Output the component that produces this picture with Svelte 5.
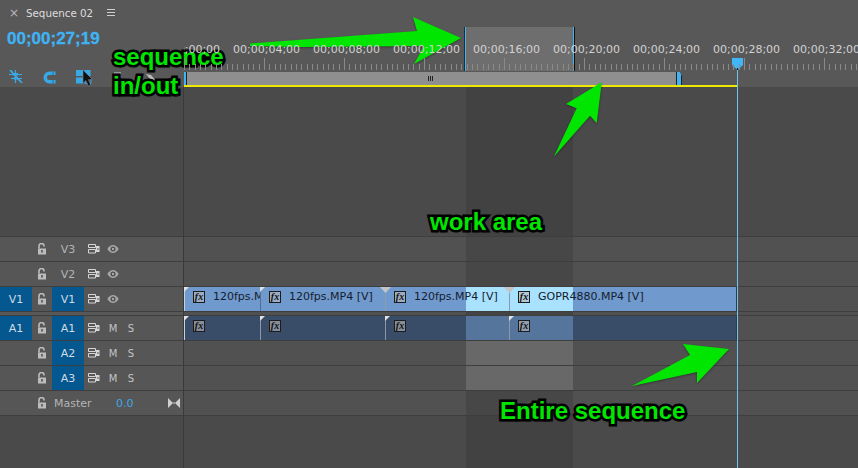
<script>
  const labels = ['00', '04', '08', '12', '16', '20', '24', '28', '32'];
  const ticks = Array.from({ length: 128 }, (_, i) => ({ x: Math.round((i * 16) / 3), major: i % 15 === 0 }));
  const tracks = [
    { name: 'V3', kind: 'v', row: 'plain-dark' },
    { name: 'V2', kind: 'v', row: 'plain-dark' },
    { name: 'V1', kind: 'v', src: 'V1', on: true, row: 'vclip', gapAfter: true },
    { name: 'A1', kind: 'a', src: 'A1', on: true, row: 'aclip' },
    { name: 'A2', kind: 'a', on: true, row: 'plain-light' },
    { name: 'A3', kind: 'a', on: true, row: 'plain-light' }
  ];
  const clips = [
    { w: 76, text: '120fps.MP4 [V]' },
    { w: 125, text: '120fps.MP4 [V]' },
    { w: 124, text: '120fps.MP4 [V]', wide: true },
    { w: 227, text: 'GOPR4880.MP4 [V]', wide: true }
  ];
</script>

{#snippet lock()}
  <svg class="ico" viewBox="0 0 10 12" width="10" height="12">
    <path d="M2 5.500V3a2.500 2.500 0 0 1 5 0v.6" fill="none" stroke="#bcbcbc" stroke-width="1.600" />
    <path d="M1 5.500h8V11.500H1z" fill="#bcbcbc" />
    <rect x="4.200" y="7" width="1.600" height="2.600" fill="#555" />
  </svg>
{/snippet}

{#snippet trackIcon()}
  <svg class="slot" viewBox="0 0 12 10" width="12" height="10">
    <path d="M.5.5h7v3h-7zM.5 5.500h7v3.500h-7z" fill="none" stroke="#d6d6d6" />
    <path d="M8 2h3.500v6H8z" fill="#d6d6d6" />
    <path d="M9 5h2" stroke="#555" />
  </svg>
{/snippet}

{#snippet eye()}
  <svg class="slot" viewBox="0 0 12 10" width="12" height="10">
    <path d="M.3 5C2 2.200 4 1 6 1s4 1.200 5.700 4C10 7.800 8 9 6 9S2 7.800.3 5z" fill="#a8a8a8" />
    <circle cx="6" cy="5" r="2.500" fill="#4c4c4c" />
    <circle cx="6" cy="5" r="1.200" fill="#a8a8a8" />
  </svg>
{/snippet}

<div class="app">
  <header class="top">
    <div class="panel">
      <div class="tab">
        <span class="close">×</span>
        <span class="title">Sequence 02</span>
        <svg class="burger" viewBox="0 0 8 8" width="8" height="8">
          <path d="M0 .5h8M0 3.500h8M0 6.500h8" stroke="#cfcfcf" />
        </svg>
      </div>
      <div class="timecode">00;00;27;19</div>
      <div class="tools">
        <svg class="tool snap" viewBox="0 0 14 13" width="14" height="13">
          <path d="M0 4.500h13M2 8.500h11M6.500 0v13" stroke="#39a9e6" stroke-width="1.200" />
          <path d="M1 0l12 13" stroke="#39a9e6" stroke-width="1.800" />
          <path d="M4 3h5v2.500H4zM5 7h4v2.500H5z" fill="#39a9e6" />
        </svg>
        <svg class="tool magnet" viewBox="0 0 13 13" width="13" height="13">
          <path d="M6.500.5a6 6 0 0 0 0 12h6V9h-6a2.500 2.500 0 0 1 0-5h6V.5z" fill="#39a9e6" />
          <path d="M9.500.5h1v3.500h-1zM9.500 9h1v3.500h-1z" fill="#1f6f9e" />
        </svg>
        <svg class="tool link" viewBox="0 0 18 18" width="18" height="18">
          <path d="M0 0h7v6H0zM8.500 0h6v6h-6zM0 7.500h7v6H0z" fill="#39a9e6" />
          <path d="M9 8h6v5.500H9z" fill="none" stroke="#39a9e6" />
          <path d="M7 0v13l3-2.500 2.300 5.500 2.400-1-2.300-5.300 4-.3z" fill="#111" stroke="#6f8390" stroke-width=".6" />
        </svg>
        <svg class="tool stray" viewBox="0 0 42 12" width="42" height="12">
          <path d="M0 8V1h7" fill="none" stroke="#d0d0d0" />
          <path d="M32 2l5 1 5 6-6-2z" fill="#bdbdbd" />
        </svg>
      </div>
    </div>

    <div class="ruler">
      <div class="area-slot">
        <div class="labels">
          {#each labels as l}
            <span class="lab">00;00;{l};00</span>
          {/each}
        </div>
        <svg class="ticks" width="674" height="13" shape-rendering="crispEdges">
          {#each ticks as t}
            <rect x={t.x} y={t.major ? 0 : 6} width="1" height={t.major ? 12 : 6} fill="#8a8a8a" />
          {/each}
        </svg>
        <div class="work-marker"></div>
      </div>
      <div class="range">
        <span class="h-left"></span>
        <div class="bar">
          <svg viewBox="0 0 5 5" width="5" height="5"><path d="M.5 0v5M2.500 0v5M4.500 0v5" stroke="#222" /></svg>
        </div>
        <span class="h-right"></span>
      </div>
      <div class="yellow"></div>
    </div>
  </header>

  <div class="body">
    <aside class="heads">
      <div class="void"></div>
      {#each tracks as t}
        <div class="head">
          <span class="src" class:on={t.src}>{t.src ?? ''}</span>
          <span class="lk">{@render lock()}</span>
          <span class="tgt" class:on={t.on}>{t.name}</span>
          <span class="extra">
            {@render trackIcon()}
            {#if t.kind === 'v'}
              {@render eye()}
            {:else}
              <span class="ms m">M</span>
              <span class="ms">S</span>
            {/if}
          </span>
        </div>
        {#if t.gapAfter}<div class="gap"></div>{/if}
      {/each}
      <div class="head master">
        <span class="src"></span>
        <span class="lk">{@render lock()}</span>
        <span class="mname">Master</span>
        <span class="mval">0.0</span>
        <svg class="bow" viewBox="0 0 12 10" width="12" height="10">
          <path d="M0 0l5 5-5 5zM12 0L7 5l5 5zM5 4.500h2v1H5z" fill="#cfcfcf" />
        </svg>
      </div>
    </aside>

    <section class="lanes">
      <div class="void lane-void"></div>
      {#each tracks as t}
        <div class="lane {t.row}">
          {#if t.row === 'vclip' || t.row === 'aclip'}
            <div class="clips">
              {#each clips as c, i}
                <div class="clip" class:first={i === 0} class:lit={c.wide} style="width:{c.w}px">
                  {#if c.wide && t.row === 'vclip'}
                    <span class="tri wide"></span>
                  {:else}
                    <span class="tri"></span>
                  {/if}
                  <span class="fx">fx</span>
                  {#if t.row === 'vclip'}<span class="cname">{c.text}</span>{/if}
                </div>
              {/each}
            </div>
          {/if}
        </div>
        {#if t.gapAfter}<div class="gap"></div>{/if}
      {/each}
      <div class="lane master-lane"></div>
      <div class="lane-rest"></div>
    </section>
  </div>

  <div class="playhead-line"></div>
  <svg class="playhead" viewBox="0 0 11 12" width="11" height="12">
    <path d="M0 0h11v7l-5.500 5L0 7z" fill="#41b6f7" />
    <path d="M5 10h1v2H5z" fill="#111" />
  </svg>

  <svg class="arrows" width="858" height="468" viewBox="0 0 858 468">
    <path d="M250 43.500 417 31 413 17 461 38 414 64 424 46 300 47 250 46z" fill="#00e600" />
    <path d="M601.700 82.300 566 104 576.700 108.300 554 156.500 590 115.700 596.700 123z" fill="#00e600" />
    <path d="M632 386 690 355 683 344 729 349 697 383 697 372z" fill="#00e600" />
  </svg>

  <div class="note n1">sequence<br />in/out</div>
  <div class="note n2">work area</div>
  <div class="note n3">Entire sequence</div>
</div>

<style>
  :global(body) {
    margin: 0;
    background: #4a4a4a;
  }
  .app {
    position: relative;
    width: 858px;
    height: 468px;
    overflow: hidden;
    font-family: "DejaVu Sans", sans-serif;
    font-size: 11px;
    background: #4a4a4a;
    color: #c8c8c8;
  }

  .top {
    display: flex;
    height: 87px;
    background: #585858;
  }
  .panel {
    width: 184px;
    flex: none;
    position: relative;
  }
  .tab {
    display: flex;
    align-items: center;
    height: 26px;
    padding-left: 9px;
  }
  .close {
    width: 17px;
    font-size: 12px;
    color: #b8b8b8;
  }
  .title {
    color: #dedede;
    width: 78px;
    font-size: 10.3px;
  }
  .burger {
    margin-left: 3px;
  }
  .timecode {
    padding-left: 7px;
    margin-top: 1px;
    height: 21px;
    font: bold 17px/24px "Liberation Sans", sans-serif;
    color: #3fb3f4;
    -webkit-text-stroke: .3px #3fb3f4;
  }
  .tools {
    display: flex;
    align-items: flex-start;
    padding: 22px 0 0 9px;
  }
  .tool {
    flex: none;
  }
  .magnet {
    margin-left: 20px;
    margin-top: 1px;
  }
  .link {
    margin-left: 20px;
  }
  .stray {
    margin-left: 20px;
    margin-top: 2px;
  }

  .ruler {
    flex: 1;
    min-width: 0;
    display: flex;
    flex-direction: column;
    padding-top: 43px;
    overflow: hidden;
  }
  .area-slot {
    position: relative;
    height: 29px;
  }
  .labels {
    position: relative;
    z-index: 1;
    display: flex;
    height: 14px;
    line-height: 13px;
    margin-left: -31px;
    white-space: nowrap;
  }
  .lab {
    width: 80px;
    flex: none;
    color: #d2d2d2;
  }
  .ticks {
    position: relative;
    z-index: 1;
    display: block;
    margin-top: 1px;
  }
  .work-marker {
    position: absolute;
    left: 281px;
    width: 107px;
    top: -16px;
    height: 44px;
    background: #6e6e6e;
    border-left: 1px solid #3fb3f4;
    border-right: 1px solid #3fb3f4;
    box-shadow: -1px 0 0 #2b2b2b, 1px 0 0 #111;
  }
  .range {
    display: flex;
    height: 13px;
  }
  .h-left {
    width: 3px;
    box-sizing: border-box;
    background: #3fb3f4;
    border-right: 1px solid #222;
  }
  .bar {
    width: 489px;
    background: #8f8f8f;
    display: flex;
    align-items: center;
    justify-content: center;
  }
  .bar svg {
    margin-left: -2px;
  }
  .h-right {
    width: 6px;
    box-sizing: border-box;
    background: #3fb3f4;
    border-left: 1px solid #222;
    border-right: 1px solid #222;
    clip-path: polygon(0 0, 60% 0, 100% 30%, 100% 100%, 0 100%);
  }
  .yellow {
    width: 553px;
    height: 2px;
    background: #efe800;
  }

  .body {
    display: flex;
    height: 381px;
  }
  .heads {
    width: 183px;
    flex: none;
    border-right: 1px solid #3a3a3a;
    display: flex;
    flex-direction: column;
  }
  .void {
    height: 149px;
    flex: none;
    border-bottom: 1px solid #3e3e3e;
    background: #4a4a4a;
  }
  .head {
    display: flex;
    align-items: center;
    height: 24px;
    flex: none;
    border-bottom: 1px solid #3e3e3e;
    background: #565656;
    color: #b4b4b4;
  }
  .gap {
    height: 3px;
    flex: none;
    background: #585858;
    border-bottom: 1px solid #3e3e3e;
  }
  .src,
  .tgt {
    width: 32px;
    height: 100%;
    flex: none;
    display: flex;
    align-items: center;
    justify-content: center;
    font-size: 11px;
  }
  .src.on,
  .tgt.on {
    background: #04588f;
    color: #cfdbe6;
  }
  .lk {
    width: 19px;
    margin-right: 1px;
    flex: none;
    display: flex;
    justify-content: center;
  }
  .ico {
    display: block;
  }
  .extra {
    display: flex;
    align-items: center;
    padding-left: 4px;
  }
  .slot {
    flex: none;
    margin-right: 7px;
  }
  .ms {
    width: 12px;
    text-align: center;
    font-size: 10px;
    color: #c4c4c4;
  }
  .ms.m {
    margin-right: 6px;
  }
  .mname {
    margin-left: 2px;
    width: 62px;
    flex: none;
    color: #b4b4b4;
  }
  .mval {
    width: 52px;
    flex: none;
    color: #3fa9e6;
  }

  .lanes {
    flex: 1;
    min-width: 0;
    display: flex;
    flex-direction: column;
    --a: 282px;
    --b: 389px;
  }
  .lane-void {
    background: linear-gradient(90deg, #4a4a4a var(--a), #424242 var(--a) var(--b), #4a4a4a var(--b));
  }
  .lane {
    height: 24px;
    flex: none;
    border-bottom: 1px solid #3e3e3e;
  }
  .lanes .gap {
    background: linear-gradient(90deg, #505050 var(--a), #444 var(--a) var(--b), #505050 var(--b));
  }
  .plain-dark,
  .master-lane {
    background: linear-gradient(90deg, #515151 var(--a), #474747 var(--a) var(--b), #515151 var(--b));
  }
  .plain-light {
    background: linear-gradient(90deg, #515151 var(--a), #686868 var(--a) var(--b), #515151 var(--b));
  }
  .vclip {
    background: #515151;
  }
  .aclip {
    background: #515151;
  }
  .clips {
    display: flex;
    width: 553px;
    height: 100%;
    border-right: 1px solid #3a3a3a;
    box-sizing: border-box;
  }
  .vclip .clips {
    background: linear-gradient(90deg, #7099cd var(--a), #a9e2ff var(--a) var(--b), #7099cd var(--b));
  }
  .aclip .clips {
    background: linear-gradient(90deg, #3a4d68 var(--a), #55759c var(--a) var(--b), #3a4d68 var(--b));
  }
  .clip {
    position: relative;
    flex: none;
    box-sizing: border-box;
    display: flex;
    align-items: flex-start;
    padding: 4px 0 0 8px;
    border-left: 1px solid #4f6f99;
    height: 100%;
  }
  .clip.lit {
    border-left-color: #8c9bad;
  }
  .aclip .clip {
    border-left-color: #8b97a6;
  }
  .clip.first {
    border-left-color: #c4d2e2;
  }
  .tri {
    position: absolute;
    left: -1px;
    top: 0;
    width: 5px;
    height: 5px;
    background: #e2e2e2;
    clip-path: polygon(0 0, 100% 0, 0 100%);
  }
  .tri.wide {
    left: -6px;
    width: 11px;
    height: 6px;
    clip-path: polygon(0 0, 100% 0, 50% 100%);
    background: #c4c4c4;
  }
  .fx {
    width: 10px;
    height: 10px;
    flex: none;
    border: 1px solid #1c1c1c;
    background: rgba(185, 185, 185, .6);
    font: italic bold 10px/9px "Liberation Serif", serif;
    color: #111;
    text-align: center;
  }
  .cname {
    margin-left: 8px;
    color: #16202e;
    white-space: nowrap;
    overflow: hidden;
    line-height: 11px;
    flex: 0 1 auto;
    min-width: 0;
  }
  .lane-rest {
    flex: 1;
    background: linear-gradient(90deg, #4a4a4a var(--a), #424242 var(--a) var(--b), #4a4a4a var(--b));
  }

  .playhead-line {
    position: absolute;
    left: 737px;
    top: 70px;
    bottom: 0;
    width: 1px;
    background: #6fc1ee;
  }
  .playhead {
    position: absolute;
    left: 732px;
    top: 58px;
  }
  .arrows {
    position: absolute;
    left: 0;
    top: 0;
    pointer-events: none;
    filter: drop-shadow(0 1px 1px rgba(0, 0, 0, .35));
  }
  .note {
    position: absolute;
    font: bold 24px/29px "Liberation Sans", sans-serif;
    color: #00e600;
    white-space: nowrap;
    -webkit-text-stroke: 5px #000;
    paint-order: stroke fill;
    text-shadow: 0 0 2px #000, 0 0 3px #000, 0 1px 3px rgba(0, 0, 0, .8);
  }
  .n1 {
    left: 113px;
    top: 42px;
  }
  .n2 {
    left: 430px;
    top: 207px;
  }
  .n3 {
    left: 500px;
    top: 396px;
  }
</style>
